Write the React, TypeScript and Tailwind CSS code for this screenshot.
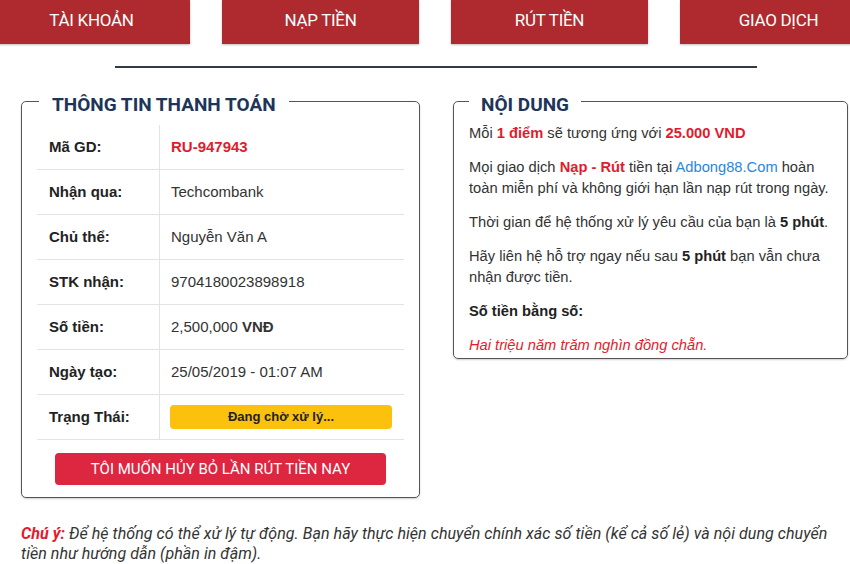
import React from "react";

const rows: { label: string; value: React.ReactNode }[] = [
  { label: "Mã GD:", value: <span className="font-bold text-[#e21b2d]">RU-947943</span> },
  { label: "Nhận qua:", value: "Techcombank" },
  { label: "Chủ thể:", value: "Nguyễn Văn A" },
  { label: "STK nhận:", value: "9704180023898918" },
  { label: "Số tiền:", value: <span>2,500,000 <b>VNĐ</b></span> },
  { label: "Ngày tạo:", value: "25/05/2019 - 01:07 AM" },
];

const arial = "font-['Liberation_Sans','Arial',sans-serif]";

export default function App() {
  return (
    <div className="w-[850px] h-[564px] overflow-hidden bg-white text-[#222] font-['Roboto','Liberation_Sans',sans-serif]">
      {/* tabs */}
      <div className="flex gap-[32px] ml-[-7px] h-[44px]">
        {["TÀI KHOẢN", "NẠP TIỀN", "RÚT TIỀN", "GIAO DỊCH"].map((t) => (
          <div
            key={t}
            className="w-[197px] shrink-0 h-[44px] bg-[#ae2a2e] text-white flex items-center justify-center pb-[3px] text-[17px] tracking-[-0.3px] shadow-[0_1px_2px_rgba(0,0,0,0.25)]"
          >
            {t}
          </div>
        ))}
      </div>
      {/* divider */}
      <div className="ml-[115px] mt-[22px] w-[642px] h-[2px] bg-[#2f3a4a]" />

      <div className="flex mt-[23px] ml-[21px] gap-[33px] items-start">
        {/* left */}
        <fieldset className="w-[399px] h-[407px] border-[1.5px] border-[#555] rounded-[5px] px-[15px] shadow-[0_1px_2px_rgba(0,0,0,0.2)]">
          <legend className="ml-[2px] px-[13px] text-[19px] leading-[20px] font-bold text-[#1d3558]">
            <span className="relative top-[4px]">THÔNG TIN THANH TOÁN</span>
          </legend>
          <div className={`mt-[14px] ${arial}`}>
            {rows.map((r) => (
              <div key={r.label} className="flex h-[45px] border-b border-[#e3e3e3]">
                <div className="w-[123px] border-r border-[#e3e3e3] pl-[12px] flex items-center font-bold text-[15px] text-[#222]">
                  {r.label}
                </div>
                <div className="pl-[11px] flex items-center text-[15px] text-[#333]">{r.value}</div>
              </div>
            ))}
            <div className="flex h-[45px] border-b border-[#e3e3e3]">
              <div className="w-[123px] border-r border-[#e3e3e3] pl-[12px] flex items-center font-bold text-[15px] text-[#222]">
                Trạng Thái:
              </div>
              <div className="pl-[10px] flex items-center">
                <div className="w-[222px] h-[24px] rounded-[4px] bg-[#fcc10d] flex items-center justify-center text-[13px] font-bold text-[#222]">
                  Đang chờ xử lý...
                </div>
              </div>
            </div>
          </div>
          <div className="flex justify-start pl-[18px] mt-[13px]">
            <div className="w-[331px] h-[32px] rounded-[4px] bg-[#dd2640] text-white text-[15px] flex items-center justify-center">
              TÔI MUỐN HỦY BỎ LẦN RÚT TIỀN NAY
            </div>
          </div>
        </fieldset>

        {/* right */}
        <fieldset className="w-[395px] h-[268px] border-[1.5px] border-[#555] rounded-[5px] px-[15px] shadow-[0_1px_2px_rgba(0,0,0,0.2)]">
          <legend className="ml-0 px-[12px] text-[19px] leading-[20px] font-bold text-[#1d3558]">
            <span className="relative top-[4px]">NỘI DUNG</span>
          </legend>
          <div className={`text-[14.7px] leading-[21px] text-[#333] mt-[12px] flex flex-col gap-[13px] ${arial}`}>
            <p>
              Mỗi <b className="text-[#e21b2d]">1 điểm</b> sẽ tương ứng với{" "}
              <b className="text-[#e21b2d]">25.000 VND</b>
            </p>
            <p>
              Mọi giao dịch <b className="text-[#e21b2d]">Nạp - Rút</b> tiền tại{" "}
              <span className="text-[#2a86dc]">Adbong88.Com</span> hoàn toàn miễn phí và không giới hạn
              lần nạp rút trong ngày.
            </p>
            <p>
              Thời gian để hệ thống xử lý yêu cầu của bạn là <b className="text-[#222]">5 phút</b>.
            </p>
            <p>
              Hãy liên hệ hỗ trợ ngay nếu sau <b className="text-[#222]">5 phút</b> bạn vẫn chưa nhận
              được tiền.
            </p>
            <p className="font-bold text-[#222]">Số tiền bằng số:</p>
            <p className="italic text-[#e21b2d]">Hai triệu năm trăm nghìn đồng chẵn.</p>
          </div>
        </fieldset>
      </div>

      <p className="ml-[21px] mt-[26px] w-[829px] text-[16px] leading-[20px] italic text-[#333] tracking-[0.05px] whitespace-nowrap">
        <b className="text-[#e21b2d]">Chú ý:</b> Để hệ thống có thể xử lý tự động. Bạn hãy thực hiện chuyển
        chính xác số tiền (kể cả số lẻ) và nội dung chuyển
        <br />
        tiền như hướng dẫn (phần in đậm).
      </p>
    </div>
  );
}
